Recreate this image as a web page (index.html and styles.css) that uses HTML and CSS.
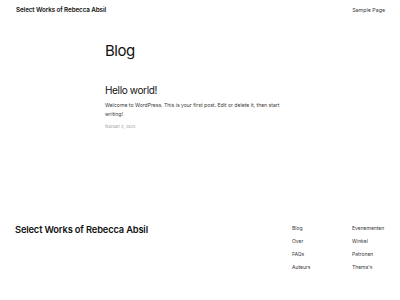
FILE: index.html
```html
<!DOCTYPE html>
<html lang="nl">
<head>
  <meta charset="UTF-8">
  <meta name="viewport" content="width=device-width, initial-scale=1.0">
  <title>Blog - Select Works of Rebecca Absil</title>
  <link rel="stylesheet" href="styles.css">
</head>
<body>
  <header class="site-header">
    <a href="#" class="site-title">Select Works of Rebecca Absil</a>
    <nav class="site-nav">
      <a href="#">Sample Page</a>
    </nav>
  </header>

  <main class="site-main">
    <h1 class="page-title">Blog</h1>

    <article class="post">
      <h2 class="post-title">Hello world!</h2>
      <p class="post-excerpt">
        Welcome to WordPress. This is your first post. Edit or delete it, then start writing!
      </p>
      <time class="post-date">februari 4, 2025</time>
    </article>
  </main>

  <footer class="site-footer">
    <a href="#" class="footer-title">Select Works of Rebecca Absil</a>
    <div class="footer-links">
      <ul class="footer-col">
        <li><a href="#">Blog</a></li>
        <li><a href="#">Over</a></li>
        <li><a href="#">FAQs</a></li>
        <li><a href="#">Auteurs</a></li>
      </ul>
      <ul class="footer-col">
        <li><a href="#">Evenementen</a></li>
        <li><a href="#">Winkel</a></li>
        <li><a href="#">Patronen</a></li>
        <li><a href="#">Thema's</a></li>
      </ul>
    </div>
  </footer>
</body>
</html>
```

FILE: styles.css
```css
:root {
  --text: #111111;
  --soft: #3a3a3a;
  --muted: #9a9a9a;
  --bg: #ffffff;
}

* {
  margin: 0;
  padding: 0;
  box-sizing: border-box;
}

body {
  font-family: 'Inter', 'Liberation Sans', sans-serif;
  background: var(--bg);
  color: var(--text);
  width: 400px;
  height: 300px;
  overflow: hidden;
}

a {
  color: inherit;
  text-decoration: none;
}

ul {
  list-style: none;
}

.site-header {
  display: flex;
  align-items: center;
  justify-content: space-between;
  height: 20px;
  padding: 0 15px 0 16px;
}

.site-title {
  font-size: 6.3px;
  font-weight: 600;
  letter-spacing: -0.1px;
}

.site-nav {
  font-size: 5.3px;
  color: var(--soft);
}

.site-main {
  padding-left: 105px;
  width: 300px;
}

.page-title {
  font-size: 15px;
  font-weight: 400;
  line-height: 1.2;
  letter-spacing: -0.5px;
  margin-top: 22px;
}

.post {
  margin-top: 24px;
}

.post-title {
  font-size: 10px;
  font-weight: 400;
  line-height: 1.2;
  letter-spacing: -0.35px;
}

.post-excerpt {
  font-size: 5.1px;
  line-height: 1.8;
  margin-top: 5px;
  width: 185px;
  color: var(--soft);
}

.post-date {
  display: block;
  font-size: 4px;
  color: var(--muted);
  margin-top: 5px;
}

.site-footer {
  display: flex;
  justify-content: space-between;
  padding: 0 15px;
  margin-top: 94.5px;
}

.footer-title {
  font-size: 9.3px;
  font-weight: 600;
  letter-spacing: -0.15px;
  line-height: 1.2;
}

.footer-links {
  display: grid;
  grid-template-columns: 60px 33px;
  width: 93px;
  margin-top: -2px;
}

.footer-col li {
  font-size: 5px;
  line-height: 13.2px;
  color: var(--soft);
}
```
